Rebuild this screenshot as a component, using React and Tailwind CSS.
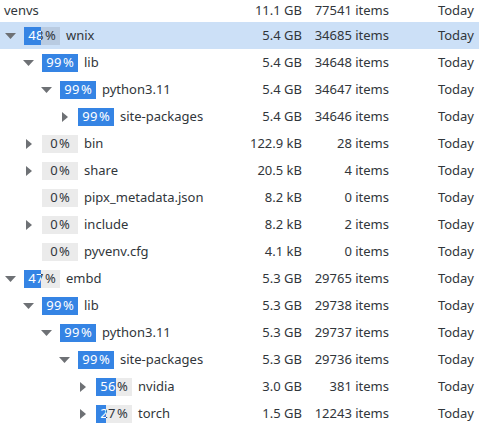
const rows = [
  { level: 0, arrow: 'down', pct: 48, name: 'wnix', size: '5.4 GB', items: '34685 items', selected: true },
  { level: 1, arrow: 'down', pct: 99, name: 'lib', size: '5.4 GB', items: '34648 items' },
  { level: 2, arrow: 'down', pct: 99, name: 'python3.11', size: '5.4 GB', items: '34647 items' },
  { level: 3, arrow: 'right', pct: 99, name: 'site-packages', size: '5.4 GB', items: '34646 items' },
  { level: 1, arrow: 'right', pct: 0, name: 'bin', size: '122.9 kB', items: '28 items' },
  { level: 1, arrow: 'right', pct: 0, name: 'share', size: '20.5 kB', items: '4 items' },
  { level: 1, arrow: null, pct: 0, name: 'pipx_metadata.json', size: '8.2 kB', items: '0 items' },
  { level: 1, arrow: 'right', pct: 0, name: 'include', size: '8.2 kB', items: '2 items' },
  { level: 1, arrow: null, pct: 0, name: 'pyvenv.cfg', size: '4.1 kB', items: '0 items' },
  { level: 0, arrow: 'down', pct: 47, name: 'embd', size: '5.3 GB', items: '29765 items' },
  { level: 1, arrow: 'down', pct: 99, name: 'lib', size: '5.3 GB', items: '29738 items' },
  { level: 2, arrow: 'down', pct: 99, name: 'python3.11', size: '5.3 GB', items: '29737 items' },
  { level: 3, arrow: 'down', pct: 99, name: 'site-packages', size: '5.3 GB', items: '29736 items' },
  { level: 4, arrow: 'right', pct: 56, name: 'nvidia', size: '3.0 GB', items: '381 items' },
  { level: 4, arrow: 'right', pct: 27, name: 'torch', size: '1.5 GB', items: '12243 items' },
]

const indents = ['pl-[5px]', 'pl-[23px]', 'pl-[41px]', 'pl-[59px]', 'pl-[77px]']

function Arrow({ dir }) {
  return (
    <div className="w-[11px] h-[11px] mr-[8px] flex items-center justify-center">
      {dir === 'down' && (
        <svg width="11" height="6" viewBox="0 0 11 6"><path d="M0 0 L11 0 L5.5 6 Z" fill="#6e7175" /></svg>
      )}
      {dir === 'right' && (
        <svg width="6" height="10" viewBox="0 0 6 10"><path d="M0 0 L6 5 L0 10 Z" fill="#6e7175" /></svg>
      )}
    </div>
  )
}

function PctText({ pct }) {
  return (
    <span className="whitespace-nowrap">
      <span className="tracking-[0.5px]">{pct}</span>
      <span className="ml-[1px]">%</span>
    </span>
  )
}

function Percent({ pct, selected }) {
  return (
    <div className={`relative w-[36px] h-[18px] shrink-0 ${selected ? 'bg-[#b9cbe1]' : 'bg-[#ebebeb]'}`}>
      <div className="absolute inset-0 flex items-center justify-center text-[#31363b]"><PctText pct={pct} /></div>
      <div className="absolute top-0 left-0 h-full overflow-hidden bg-[#3584e4]" style={{ width: `${pct}%` }}>
        <div className="w-[36px] h-full flex items-center justify-center text-white"><PctText pct={pct} /></div>
      </div>
    </div>
  )
}

function Cols({ size, items }) {
  return (
    <>
      <div className="w-[80px] text-right shrink-0">{size}</div>
      <div className="w-[87px] text-right shrink-0">{items}</div>
      <div className="w-[90px] text-right pr-[5px] shrink-0">Today</div>
    </>
  )
}

export default function App() {
  return (
    <div className="w-[479px] h-[431px] overflow-hidden bg-white text-[13px] text-[#31363b]" style={{ fontFamily: '"Noto Sans", "Open Sans", sans-serif' }}>
      <div className="h-[22px] flex items-center">
        <div className="flex-1 pl-[4px]">venvs</div>
        <Cols size="11.1 GB" items="77541 items" />
      </div>
      {rows.map((r, i) => (
        <div key={i} className={`h-[27px] flex items-center ${r.selected ? 'bg-[#cce0f7]' : ''}`}>
          <div className={`flex-1 flex items-center ${indents[r.level]}`}>
            <Arrow dir={r.arrow} />
            <Percent pct={r.pct} selected={r.selected} />
            <div className="ml-[6px] whitespace-nowrap">{r.name}</div>
          </div>
          <Cols size={r.size} items={r.items} />
        </div>
      ))}
    </div>
  )
}
